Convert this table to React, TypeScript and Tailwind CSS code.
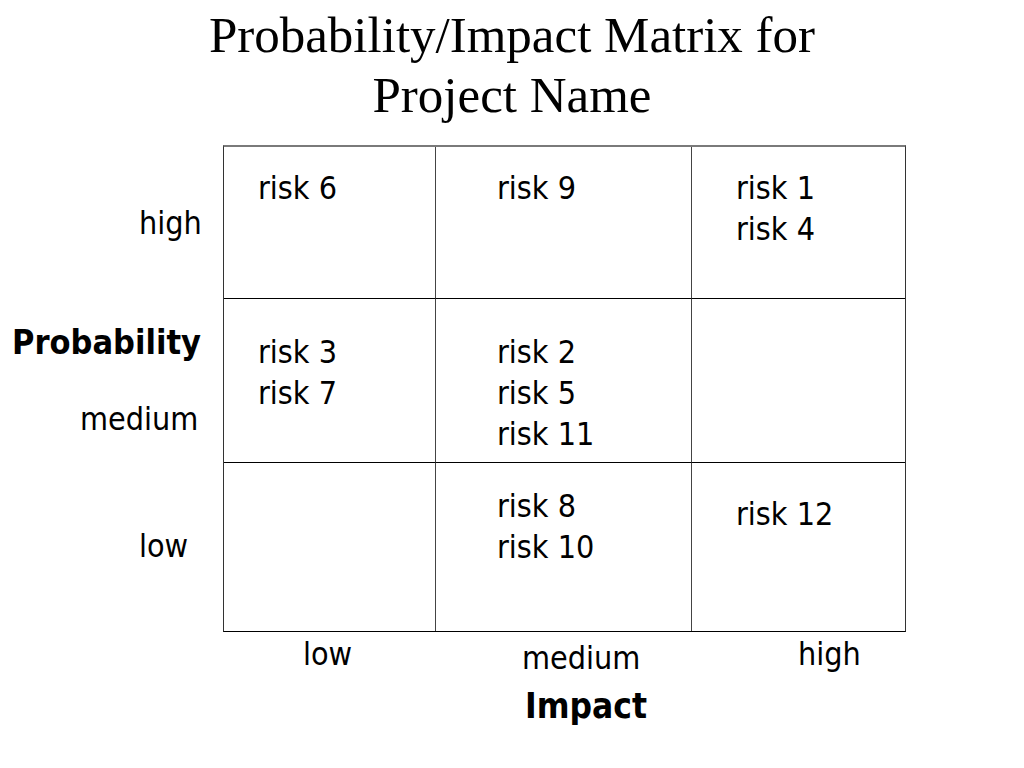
import React from 'react';

const sans = "font-['DejaVu_Sans_Condensed','DejaVu_Sans',sans-serif]";

interface Cell {
  risks: string[];
  pad: string;
}

const rows: Cell[][] = [
  [
    { risks: ['risk 6'], pad: 'pl-[34px] pt-[21px]' },
    { risks: ['risk 9'], pad: 'pl-[61px] pt-[21px]' },
    { risks: ['risk 1', 'risk 4'], pad: 'pl-[44px] pt-[21px]' },
  ],
  [
    { risks: ['risk 3', 'risk 7'], pad: 'pl-[34px] pt-[33px]' },
    { risks: ['risk 2', 'risk 5', 'risk 11'], pad: 'pl-[61px] pt-[33px]' },
    { risks: [], pad: '' },
  ],
  [
    { risks: [], pad: '' },
    { risks: ['risk 8', 'risk 10'], pad: 'pl-[61px] pt-[23px]' },
    { risks: ['risk 12'], pad: 'pl-[44px] pt-[31px]' },
  ],
];

const App: React.FC = () => {
  return (
    <div className={`w-[1024px] h-[768px] bg-white text-black overflow-hidden ${sans}`}>
      {/* Title */}
      <h1 className="pt-[5px] text-center font-['Liberation_Serif',serif] text-[51px] leading-[60px]">
        Probability/Impact Matrix for
        <br />
        Project Name
      </h1>

      {/* Matrix with probability labels */}
      <div className="mt-[20px] flex text-[32px] leading-[41px]">
        <div className="w-[223px] pt-[2px] grid grid-rows-[151px_164px_169px]">
          <div className="pl-[139px] pt-[56px]">high</div>
          <div className="flex flex-col">
            <div className="pl-[12px] pt-[24px] font-bold text-[34px]">Probability</div>
            <div className="pl-[80px] mt-[36px]">medium</div>
          </div>
          <div className="pl-[139px] pt-[64px]">low</div>
        </div>

        <div className="grid grid-cols-[211px_256px_214px] grid-rows-[151px_164px_169px] border-t-2 border-t-[#7a7a7a] border-l border-r border-b border-l-[#333] border-r-[#333] border-b-black">
          {rows.map((row, r) =>
            row.map((cell, c) => (
              <div
                key={`${r}-${c}`}
                className={`${cell.pad} ${c > 0 ? 'border-l border-l-[#444]' : ''} ${r > 0 ? 'border-t border-t-black' : ''}`}
              >
                {cell.risks.map((risk) => (
                  <div key={risk}>{risk}</div>
                ))}
              </div>
            ))
          )}
        </div>
      </div>

      {/* Impact labels */}
      <div className="mt-[2px] ml-[223px] flex h-[41px] text-[32px] leading-[41px]">
        <div className="w-[212px] pl-[80px]">low</div>
        <div className="w-[256px] pl-[87px] pt-[4px]">medium</div>
        <div className="w-[214px] pl-[107px]">high</div>
      </div>
      <div className="mt-[11px] pl-[525px] text-[35px] leading-[41px] font-bold">Impact</div>
    </div>
  );
};

export default App;
